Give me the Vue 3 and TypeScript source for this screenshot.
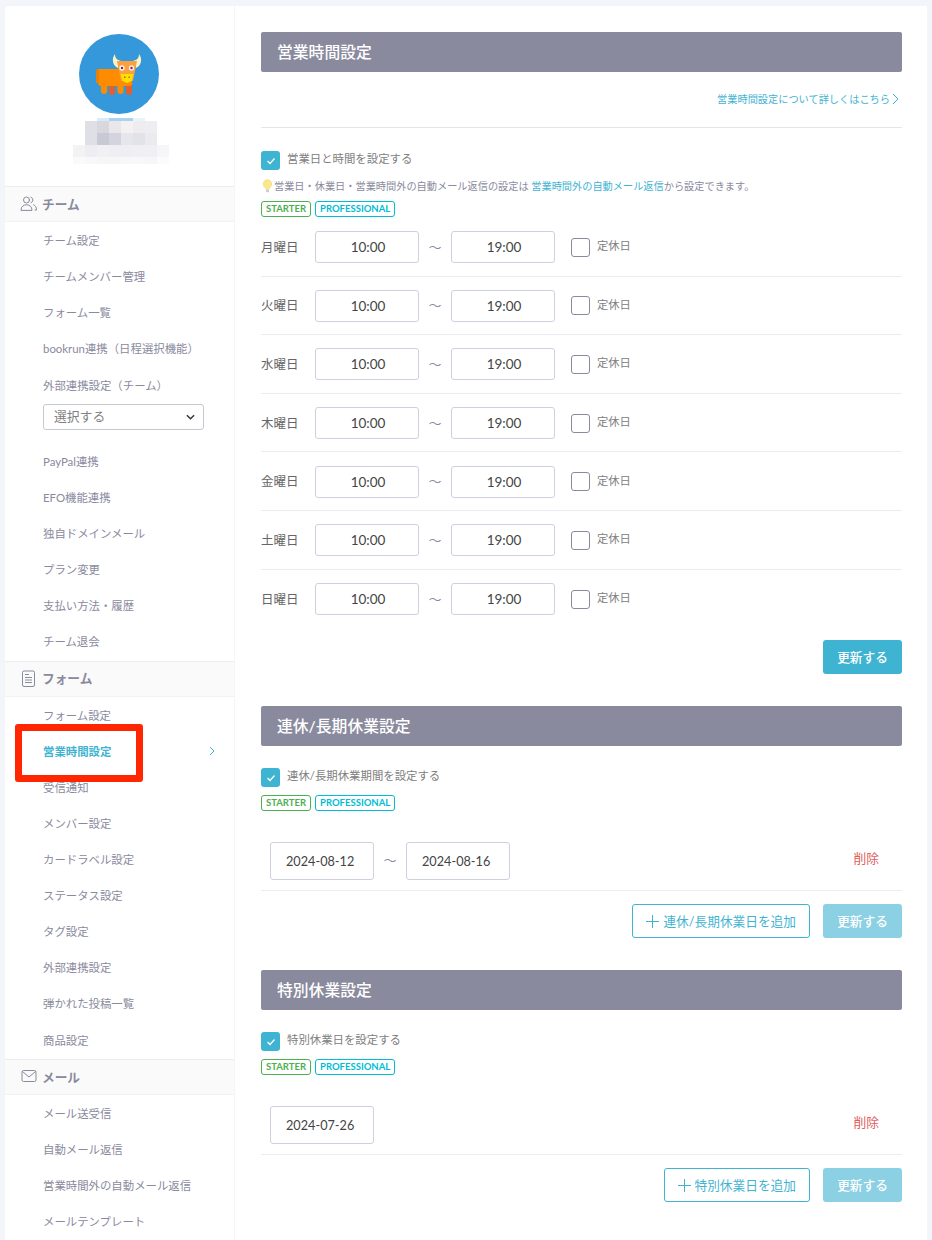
<template>
  <div class="page">
    <aside class="sidebar">
      <div class="profile">
        <svg class="avatar" width="80" height="80" viewBox="0 0 80 80">
          <circle cx="40" cy="40" r="40" fill="#3498db" />
          <path d="M39 34c-5-2-7-9-3-14 0 4 2 6 6 7z" fill="#fdf2c4" />
          <path d="M57 34c5-2 7-9 3-14 0 4-2 6-6 7z" fill="#fdf2c4" />
          <path d="M30 50h6v8a3 3 0 0 1-6 0z" fill="#e2602c" />
          <path d="M47 50h6v8a3 3 0 0 1-6 0z" fill="#e2602c" />
          <path d="M19 35h26v17h-.5v5a3 3 0 0 1-6 0v-5H28v5a3 3 0 0 1-6 0v-5a3 3 0 0 1-3-3z" fill="#ff8c00" />
          <rect x="40" y="38" width="13" height="14" rx="2" fill="#ff8c00" />
          <path d="M19 35a2 2 0 0 0-2 2v12h3V35z" fill="#e8810a" />
          <path d="M38 27h20l-4 20h-12z" fill="#f9a040" />
          <path d="M41.500 40h13l-2 7-4.500 2-4.500-2z" fill="#ffe100" />
          <circle cx="43" cy="34" r="2.7" fill="#fdf2e0" />
          <circle cx="52.500" cy="34" r="2.7" fill="#fdf2e0" />
          <circle cx="43" cy="34" r="1.2" fill="#8e1a5c" />
          <circle cx="52.500" cy="34" r="1.2" fill="#8e1a5c" />
          <rect x="45" y="42.500" width="1.500" height="1.500" fill="#c9651a" />
          <rect x="49.500" y="42.500" width="1.500" height="1.500" fill="#c9651a" />
        </svg>
        <div class="blur-top"></div>
        <div class="blur-row">
          <span v-for="(c, i) in blurA" :key="i" class="cell" :style="{ background: c }"></span>
        </div>
        <div class="blur-row">
          <span v-for="(c, i) in blurB" :key="i" class="cell" :style="{ background: c }"></span>
        </div>
        <div class="blur-row">
          <span v-for="(c, i) in blurC" :key="i" class="cell" :style="{ background: c }"></span>
        </div>
        <div class="blur-row short">
          <span v-for="(c, i) in blurD" :key="i" class="cell" :style="{ background: c }"></span>
        </div>
      </div>

      <div class="nav-head">
        <svg width="18" height="18" viewBox="0 0 18 18" fill="none" stroke="#8a8a9e" stroke-width="1" stroke-linecap="round">
          <circle cx="6.5" cy="5" r="3" />
          <path d="M1 15c0-3.400 2.300-5.200 5.500-5.200s5.500 1.800 5.500 5.200z" />
          <path d="M11 2.200a3 3 0 0 1 0 5.600M13.500 9.800c1.900.7 3 2.400 3 5.200h-1.500" />
        </svg>
        <span class="head-text">チーム</span>
      </div>
      <ul class="nav-list">
        <li>チーム設定</li>
        <li>チームメンバー管理</li>
        <li>フォーム一覧</li>
        <li>bookrun連携（日程選択機能）</li>
        <li>外部連携設定（チーム）</li>
        <li class="select-item">
          <div class="fake-select">
            <span>選択する</span>
            <svg width="9" height="6" viewBox="0 0 10 6" fill="none" stroke="#333" stroke-width="1.6"><path d="M1 1l4 4 4-4" /></svg>
          </div>
        </li>
        <li>PayPal連携</li>
        <li>EFO機能連携</li>
        <li>独自ドメインメール</li>
        <li>プラン変更</li>
        <li>支払い方法・履歴</li>
        <li>チーム退会</li>
      </ul>

      <div class="nav-head">
        <svg width="18" height="18" viewBox="0 0 18 18" fill="none" stroke="#8a8a9e" stroke-width="1">
          <rect x="2.5" y="1" width="12" height="15.5" rx="1.5" />
          <path d="M5 4.500h4M5 7.500h7M5 10h7M5 12.500h7" />
        </svg>
        <span class="head-text">フォーム</span>
      </div>
      <ul class="nav-list">
        <li>フォーム設定</li>
        <li class="active">
          営業時間設定
          <svg width="6" height="10" viewBox="0 0 6 10" fill="none" stroke="#3fb4d2" stroke-width="1"><path d="M1 1l4 4-4 4" /></svg>
        </li>
        <li>受信通知</li>
        <li>メンバー設定</li>
        <li>カードラベル設定</li>
        <li>ステータス設定</li>
        <li>タグ設定</li>
        <li>外部連携設定</li>
        <li>弾かれた投稿一覧</li>
        <li>商品設定</li>
      </ul>

      <div class="nav-head">
        <svg width="18" height="18" viewBox="0 0 18 18" fill="none" stroke="#8a8a9e" stroke-width="1">
          <rect x="2" y="2.5" width="14" height="11" rx="1.5" />
          <path d="M2.500 3.500L9 9l6.500-5.500" />
        </svg>
        <span class="head-text">メール</span>
      </div>
      <ul class="nav-list">
        <li>メール送受信</li>
        <li>自動メール返信</li>
        <li>営業時間外の自動メール返信</li>
        <li>メールテンプレート</li>
      </ul>
    </aside>

    <main class="content">
      <section class="block">
        <h2 class="block-title">営業時間設定</h2>
        <div class="help-row">
          <a class="help-link">営業時間設定について詳しくはこちら</a>
          <svg width="7" height="12" viewBox="0 0 7 12" fill="none" stroke="#3fb4d2" stroke-width="1"><path d="M1 1l5 5-5 5" /></svg>
        </div>
        <label class="check-line">
          <span class="check on">
            <svg width="10" height="8" viewBox="0 0 10 8" fill="none" stroke="#fff" stroke-width="1.3"><path d="M1.500 4l2.500 2.500 4.500-5" /></svg>
          </span>
          <span class="check-text">営業日と時間を設定する</span>
        </label>
        <p class="note">
          <svg class="bulb" width="9" height="14" viewBox="1 .5 9 13.5">
            <path d="M5.500 1a4.300 4.300 0 0 0-2.500 7.800c.6.500.8 1 .8 1.700h3.400c0-.7.2-1.200.8-1.700A4.300 4.300 0 0 0 5.500 1z" fill="#fbe88e" stroke="#f2d86a" stroke-width=".6" />
            <rect x="4" y="11" width="3" height="2.400" rx=".8" fill="#c8c8d0" />
          </svg><span>営業日・休業日・営業時間外の自動メール返信の設定は <a class="note-link">営業時間外の自動メール返信</a>から設定できます。</span>
        </p>
        <div class="badges">
          <span class="badge starter">STARTER</span>
          <span class="badge pro">PROFESSIONAL</span>
        </div>
        <div class="day-list">
          <div v-for="day in days" :key="day" class="day-row">
            <span class="day-name">{{ day }}</span>
            <span class="field">10:00</span>
            <span class="tilde">〜</span>
            <span class="field">19:00</span>
            <span class="check off"></span>
            <span class="closed">定休日</span>
          </div>
        </div>
        <div class="actions first-actions">
          <button class="btn-primary">更新する</button>
        </div>
      </section>

      <section class="block">
        <h2 class="block-title">連休/長期休業設定</h2>
        <label class="check-line compact">
          <span class="check on">
            <svg width="10" height="8" viewBox="0 0 10 8" fill="none" stroke="#fff" stroke-width="1.3"><path d="M1.500 4l2.500 2.500 4.500-5" /></svg>
          </span>
          <span class="check-text">連休/長期休業期間を設定する</span>
        </label>
        <div class="badges">
          <span class="badge starter">STARTER</span>
          <span class="badge pro">PROFESSIONAL</span>
        </div>
        <div class="date-row">
          <span class="field date">2024-08-12</span>
          <span class="tilde">〜</span>
          <span class="field date">2024-08-16</span>
          <a class="delete">削除</a>
        </div>
        <div class="actions">
          <button class="btn-outline"><span class="plus"></span><span class="btn-label">連休/長期休業日を追加</span></button>
          <button class="btn-primary faded">更新する</button>
        </div>
      </section>

      <section class="block">
        <h2 class="block-title">特別休業設定</h2>
        <label class="check-line compact">
          <span class="check on">
            <svg width="10" height="8" viewBox="0 0 10 8" fill="none" stroke="#fff" stroke-width="1.3"><path d="M1.500 4l2.500 2.500 4.500-5" /></svg>
          </span>
          <span class="check-text">特別休業日を設定する</span>
        </label>
        <div class="badges">
          <span class="badge starter">STARTER</span>
          <span class="badge pro">PROFESSIONAL</span>
        </div>
        <div class="date-row">
          <span class="field date">2024-07-26</span>
          <a class="delete">削除</a>
        </div>
        <div class="actions">
          <button class="btn-outline"><span class="plus"></span><span class="btn-label">特別休業日を追加</span></button>
          <button class="btn-primary faded">更新する</button>
        </div>
      </section>
    </main>

    <div class="marker"></div>
  </div>
</template>

<script setup lang="ts">
const days: string[] = ['月曜日', '火曜日', '水曜日', '木曜日', '金曜日', '土曜日', '日曜日']

const blurA: string[] = ['#dfe0e6', '#d9d6de', '#ebe6ea', '#f5f0f1', '#efecf0', '#eeeef2']
const blurB: string[] = ['#dfe0e6', '#c9c9d6', '#d3d4de', '#e6e6ec', '#e2e3e9', '#ebebef']
const blurC: string[] = ['#f3f3f6', '#eeeef2', '#f1f1f4', '#eeeef3', '#eeeef3', '#f0f0f3', '#f0f0f4', '#f6f6f8']
const blurD: string[] = ['#fafafb', '#f8f8fa', '#f6f6f8', '#f6f6f8', '#f8f8fa', '#f8f8fa', '#f6f6f8', '#fbfbfc']
</script>

<style>
html,
body {
  margin: 0;
  background: #f4f4fb;
}
</style>

<style scoped>
.page {
  position: relative;
  display: flex;
  align-items: flex-start;
  gap: 1px;
  height: 1234px;
  padding: 6px 5px 0;
  overflow: hidden;
  font-family: Lato, "Noto Sans CJK JP", sans-serif;
  color: #666;
}

.sidebar {
  width: 229px;
  flex: none;
  background: #fff;
  border-radius: 4px 0 0 0;
}

.profile {
  display: flex;
  flex-direction: column;
  align-items: center;
  height: 180px;
  padding-top: 28px;
  box-sizing: border-box;
}

.avatar {
  display: block;
  margin-right: 2px;
}

.blur-top {
  width: 48px;
  height: 3px;
  margin: 4px 0 0 3px;
  background: linear-gradient(90deg, #d8ebf8 25%, #a9d2ee 25%, #a9d2ee 75%, #e8f3fb 75%);
}

.blur-row {
  display: flex;
  height: 12px;
  margin-left: 3px;
}

.blur-row.short {
  height: 7px;
}

.cell {
  display: block;
  width: 12px;
  height: 100%;
}

.nav-head {
  display: flex;
  align-items: center;
  gap: 4px;
  height: 34.3px;
  padding-left: 15px;
  background: #fafafa;
  border-top: 1px solid #ececf2;
  border-bottom: 1px solid #f2f2f5;
  font-size: 12.7px;
  font-weight: 700;
  color: #8a8a9e;
}

.head-text {
  margin-bottom: 2px;
}

.nav-list {
  list-style: none;
  margin: 0;
  padding: 0 0 1.3px;
}

.nav-list li {
  display: flex;
  align-items: center;
  justify-content: space-between;
  height: 36.05px;
  padding: 0 19px 0 38px;
  font-size: 11.4px;
  color: #8a8a9e;
}

.nav-list li.active {
  color: #3fb4d2;
  font-weight: 700;
}

.nav-list li.select-item {
  height: 39.7px;
  padding: 0 30px 0 38px;
  margin-top: 1px;
  align-items: flex-start;
}

.fake-select {
  display: flex;
  align-items: center;
  justify-content: space-between;
  width: 100%;
  height: 24px;
  padding: 0 8px 0 10px;
  border: 1px solid #c8c8d0;
  border-radius: 3px;
  font-size: 12.8px;
  color: #808080;
}

.fake-select span {
  margin-bottom: 2px;
}

.content {
  flex: 1;
  height: 1240px;
  background: #fff;
  padding: 26px 25px 0 26px;
}

.block {
  margin-bottom: 32px;
}

.block-title {
  margin: 0;
  height: 40px;
  line-height: 40px;
  padding-left: 16px;
  background: #8a8a9e;
  border-radius: 2px;
  color: #fff;
  font-size: 15.8px;
  font-weight: 500;
}

.help-row {
  display: flex;
  align-items: center;
  justify-content: flex-end;
  gap: 2px;
  height: 53px;
  padding: 0 3px 2px 0;
  border-bottom: 1px solid #e6e6ea;
  color: #3fb4d2;
}

.help-link {
  font-size: 10.2px;
  color: #3fb4d2;
}

.check-line {
  display: flex;
  align-items: center;
  gap: 7px;
  height: 19px;
  margin-top: 23px;
  font-size: 11.4px;
  color: #808080;
}

.check-line.compact {
  margin-top: 22px;
}

.check-line.compact + .badges {
  margin-top: 8px;
}

.check-text {
  line-height: 15px;
  margin-bottom: 4px;
}

.check {
  display: flex;
  align-items: center;
  justify-content: center;
  width: 19px;
  height: 19px;
  flex: none;
  box-sizing: border-box;
  border-radius: 3px;
}

.check.on {
  background: #3fb4d2;
}

.check.off {
  border: 1px solid #8a8a9e;
  background: #fff;
}

.note {
  display: flex;
  align-items: center;
  margin: 8px 0 0;
  height: 16px;
  font-size: 10.2px;
  color: #8a8a9e;
  white-space: pre-wrap;
}

.note > span {
  margin-bottom: 2px;
}

.bulb {
  margin: 0 2px;
  flex: none;
}

.note-link {
  color: #3fb4d2;
}

.badges {
  display: flex;
  gap: 4px;
  margin-top: 7px;
}

.badge {
  display: block;
  height: 16px;
  line-height: 14px;
  box-sizing: border-box;
  padding: 0 4px;
  border-radius: 3px;
  font-size: 9.5px;
  font-weight: 700;
  background: #fff;
}

.badge.starter {
  color: #4caf50;
  border: 1px solid #4caf50;
}

.badge.pro {
  color: #00bcd4;
  border: 1px solid #00bcd4;
}

.day-list {
  margin-top: 1px;
}

.day-row {
  display: flex;
  align-items: center;
  height: 58.6px;
  padding-top: 1px;
  box-sizing: border-box;
  border-bottom: 1px solid #ececf0;
}

.day-row:last-child {
  border-bottom: 0;
}

.day-name {
  width: 54px;
  margin-bottom: 2px;
  font-size: 12.5px;
  color: #666;
}

.field {
  display: flex;
  align-items: center;
  justify-content: center;
  width: 104px;
  height: 32px;
  padding-left: 2px;
  box-sizing: border-box;
  border: 1px solid #cfcfe0;
  border-radius: 3px;
  font-size: 13.5px;
  color: #444;
}

.field.date {
  height: 38px;
  justify-content: flex-start;
  padding-left: 15px;
  font-size: 12.7px;
}

.tilde {
  width: 32px;
  margin-bottom: 2px;
  text-align: center;
  font-size: 13px;
  color: #8a8a9e;
}

.day-row .check.off {
  margin-left: 16px;
}

.closed {
  margin: 0 0 4px 7px;
  font-size: 11.3px;
  color: #808080;
}

.actions {
  display: flex;
  justify-content: flex-end;
  gap: 13px;
  margin-top: 13px;
}

.first-actions {
  margin-top: 12px;
}

.btn-primary {
  width: 79px;
  height: 34px;
  padding: 0 0 2px;
  border: 0;
  border-radius: 3px;
  background: #3fb4d2;
  color: #fff;
  font-family: inherit;
  font-size: 12.7px;
  font-weight: 500;
}

.btn-primary.faded {
  background: #8bd0e3;
}

.btn-outline {
  display: flex;
  align-items: center;
  justify-content: center;
  gap: 4px;
  height: 34px;
  padding: 0 13px;
  box-sizing: border-box;
  background: #fff;
  border: 1px solid #3fb4d2;
  border-radius: 3px;
  color: #3fb4d2;
  font-family: inherit;
  font-size: 12.7px;
}

.btn-label {
  margin-bottom: 2px;
}

.plus {
  width: 13px;
  height: 13px;
  background:
    linear-gradient(#3fb4d2, #3fb4d2) center / 13px 1px no-repeat,
    linear-gradient(#3fb4d2, #3fb4d2) center / 1px 13px no-repeat;
}

.date-row {
  display: flex;
  align-items: flex-start;
  height: 49px;
  margin-top: 31px;
  padding: 0 23px 0 9px;
  box-sizing: border-box;
  border-bottom: 1px solid #ececf0;
}

.date-row .tilde {
  line-height: 36px;
}

.delete {
  margin-left: auto;
  margin-top: 6px;
  font-size: 12.8px;
  color: #e05c5c;
}

.marker {
  position: absolute;
  left: 15px;
  top: 724px;
  width: 128px;
  height: 58px;
  box-sizing: border-box;
  border: 7px solid #ff2600;
  border-radius: 3px;
  pointer-events: none;
}
</style>
